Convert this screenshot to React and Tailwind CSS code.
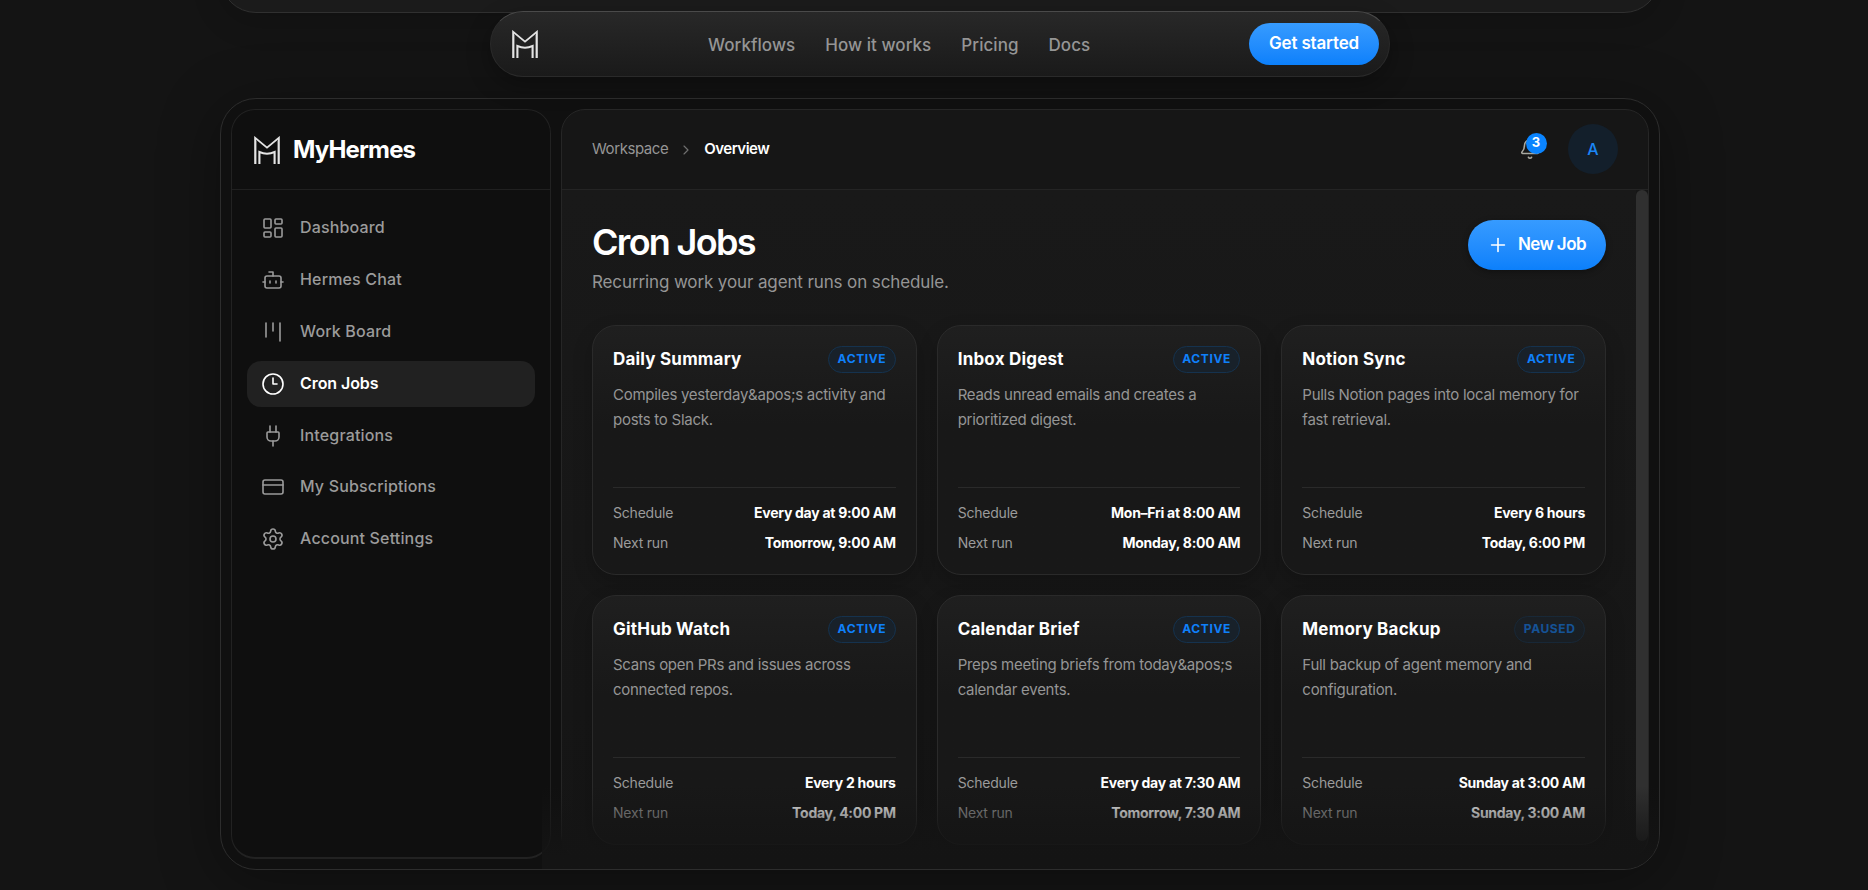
import { Bell, Bot, ChevronRight, Clock3, CreditCard, Kanban, LayoutDashboard, Plug, Plus, Settings } from "lucide-react";

const NAV_LINKS = ["Workflows", "How it works", "Pricing", "Docs"];

const MENU = [
  { label: "Dashboard", icon: LayoutDashboard },
  { label: "Hermes Chat", icon: Bot },
  { label: "Work Board", icon: Kanban },
  { label: "Cron Jobs", icon: Clock3, active: true },
  { label: "Integrations", icon: Plug },
  { label: "My Subscriptions", icon: CreditCard },
  { label: "Account Settings", icon: Settings },
];

const JOBS = [
  {
    title: "Daily Summary",
    text: "Compiles yesterday&apos;s activity and posts to Slack.",
    schedule: "Every day at 9:00 AM",
    next: "Tomorrow, 9:00 AM",
  },
  {
    title: "Inbox Digest",
    text: "Reads unread emails and creates a prioritized digest.",
    schedule: "Mon–Fri at 8:00 AM",
    next: "Monday, 8:00 AM",
  },
  {
    title: "Notion Sync",
    text: "Pulls Notion pages into local memory for fast retrieval.",
    schedule: "Every 6 hours",
    next: "Today, 6:00 PM",
  },
  {
    title: "GitHub Watch",
    text: "Scans open PRs and issues across connected repos.",
    schedule: "Every 2 hours",
    next: "Today, 4:00 PM",
  },
  {
    title: "Calendar Brief",
    text: "Preps meeting briefs from today&apos;s calendar events.",
    schedule: "Every day at 7:30 AM",
    next: "Tomorrow, 7:30 AM",
  },
  {
    title: "Memory Backup",
    text: "Full backup of agent memory and configuration.",
    schedule: "Sunday at 3:00 AM",
    next: "Sunday, 3:00 AM",
    paused: true,
  },
];

export default function App() {
  return (
    <div className="flex h-[890px] w-[1868px] flex-col overflow-hidden bg-[#141414] pl-[220px] font-['Inter','Liberation_Sans',sans-serif] text-white">
      <div className="-mt-[67px] h-20 w-[1440px] shrink-0 rounded-[36px] border border-[#303030] bg-[#1b1b1b] shadow-[0_10px_30px_rgba(0,0,0,0.15)]" />
      <TopNav />
      <div className="mt-[21px] flex h-[772px] w-[1440px] shrink-0 gap-2.5 rounded-[36px] border border-[#2d2d2d] bg-[#101010] p-2.5 shadow-[0_10px_60px_rgba(0,0,0,0.35)]">
        <Sidebar />
        <Workspace />
      </div>
    </div>
  );
}

function Logo() {
  return (
    <svg width="26" height="28" viewBox="0 0 26 28" fill="none" stroke="#e4e4e4">
      <path d="M1.1 28V1.8L13 11.6L24.9 1.8V28" strokeWidth="1.8" />
      <path d="M2.4 28V4.5M23.6 28V4.5" strokeWidth="0.9" opacity="0.5" />
      <path d="M5.4 28V16Q13 19.4 20.6 16V28" strokeWidth="2.1" />
    </svg>
  );
}

function TopNav() {
  return (
    <nav className="relative -mt-0.5 ml-[270px] flex h-[66px] w-[900px] shrink-0 items-center rounded-[33px] border border-[#2a2a2a] border-t-[#4a4a4a] bg-linear-to-b from-[#282828] to-[#1a1a1a] pr-2.5 pl-[21px] shadow-[0_8px_24px_rgba(0,0,0,0.3)]">
      <Logo />
      <div className="ml-[170px] flex gap-[30px] pt-[3px] text-[17px] font-medium tracking-[0.003em] text-[#959595]">
        {NAV_LINKS.map((link) => (
          <a key={link}>{link}</a>
        ))}
      </div>
      <button className="ml-auto h-[42px] w-[130px] rounded-[21px] bg-linear-to-b from-[#369bff] to-[#0b80fb] text-[17px] font-semibold tracking-[-0.01em]">
        Get started
      </button>
    </nav>
  );
}

function Sidebar() {
  return (
    <aside className="flex w-[320px] shrink-0 flex-col rounded-[24px] border border-[#222222] border-b-2 bg-[#0f0f0f]">
      <div className="flex h-20 items-center gap-3 border-b border-[#202020] pl-[22px]">
        <Logo />
        <span className="pl-px text-2xl font-bold tracking-[-0.035em]">MyHermes</span>
      </div>
      <div className="flex flex-col gap-1.5 px-[15px] pt-[15px]">
        {MENU.map(({ label, icon: Icon, active }) => (
          <a
            key={label}
            className={`flex h-[45.9px] items-center gap-3.5 rounded-[14px] pl-3.5 text-base font-medium tracking-[0.01em] ${
              active ? "bg-[#212121] text-white" : "text-[#9b9b9b]"
            }`}
          >
            <Icon size={24} strokeWidth={1.6} />
            <span className={active ? "pb-0.5 pl-px font-semibold tracking-[-0.005em]" : "pb-0.5 pl-px"}>{label}</span>
          </a>
        ))}
      </div>
    </aside>
  );
}

function Workspace() {
  return (
    <main className="relative flex-1 rounded-[24px] border border-[#262626] bg-[#161616]">
      <header className="flex h-20 items-center border-b border-[#242424] pr-[30px] pb-0.5 pl-[30px]">
        <div className="flex items-center pt-0.5 text-[15px]">
          <span className="tracking-[-0.028em] text-[#959595]">Workspace</span>
          <ChevronRight size={16} strokeWidth={1.75} className="mx-2.5 text-[#6f6f6f]" />
          <span className="font-semibold tracking-[-0.035em]">Overview</span>
        </div>
        <div className="relative mr-[27px] ml-auto">
          <Bell size={22} strokeWidth={1.7} className="text-[#a8a8a0]" />
          <span className="absolute -top-[5px] left-[6.5px] flex size-[21px] items-center justify-center rounded-full bg-[#0a84ff] text-[13px] font-bold">
            3
          </span>
        </div>
        <div className="flex size-[50px] items-center justify-center rounded-full bg-[#131f2b] text-base font-medium text-[#1b86f5]">
          A
        </div>
      </header>

      <div className="flex h-[660px] overflow-hidden">
        <div className="h-[690px] flex-1 bg-linear-to-b from-[#191919] to-[#151515] px-[30px] pt-[30px]">
          <div className="flex h-[105px] items-start justify-between">
            <div>
              <h1 className="text-4xl leading-[44px] font-semibold tracking-[-0.047em]">Cron Jobs</h1>
              <p className="mt-1 text-[17px] leading-7 tracking-[-0.007em] text-[#959595]">
                Recurring work your agent runs on schedule.
              </p>
            </div>
            <button className="flex h-[50px] w-[138px] items-center rounded-[25px] bg-linear-to-b from-[#369bff] to-[#0b80fb] pl-[19px] text-[17px] font-semibold tracking-[-0.035em] shadow-[0_2px_6px_rgba(0,0,0,0.35)]">
              <Plus size={22} strokeWidth={1.75} className="mr-[9px]" />
              New Job
            </button>
          </div>
          <div className="grid grid-cols-3 gap-5">
            {JOBS.map((job) => (
              <JobCard key={job.title} job={job} />
            ))}
          </div>
        </div>
        <div className="h-[651px] w-3 rounded-full bg-[#303030]" />
      </div>

      {/* fades the lower edge of the list and the panel corners */}
      <div className="pointer-events-none absolute -right-[11px] -bottom-[11px] -left-5 h-[83px] rounded-br-[35px] bg-linear-to-b from-transparent to-[#141414] to-85%" />
    </main>
  );
}

function JobCard({ job }) {
  return (
    <div className="flex h-[250px] flex-col rounded-[24px] border border-[#2a2a2a] bg-linear-to-b from-[#1f1f1f] to-[#181818] to-40% px-5 pt-5 pb-4 shadow-[0_8px_20px_rgba(0,0,0,0.2)]">
      <div className="flex h-[27px] items-center justify-between">
        <h2 className="text-[17px] font-bold tracking-[0.012em]">{job.title}</h2>
        <span
          className={`flex h-[27px] items-center rounded-full border border-[#15324e] bg-[#18212a] px-[8.5px] pb-px text-xs font-bold tracking-[0.05em] text-[#0f80fa] ${
            job.paused ? "opacity-55" : ""
          }`}
        >
          {job.paused ? "PAUSED" : "ACTIVE"}
        </span>
      </div>
      <p className="mt-[9px] text-[15px] leading-[25px] tracking-[-0.018em] text-[#959595]">{job.text}</p>
      <dl className="mt-auto border-t border-[#2a2a2a] pt-[10px] text-sm leading-[30px]">
        <Row label="Schedule" value={job.schedule} />
        <Row label="Next run" value={job.next} />
      </dl>
    </div>
  );
}

function Row({ label, value }) {
  return (
    <div className="flex justify-between">
      <dt className="tracking-[-0.015em] text-[#9b9b9b]">{label}</dt>
      <dd className="font-bold tracking-[-0.02em]">{value}</dd>
    </div>
  );
}
